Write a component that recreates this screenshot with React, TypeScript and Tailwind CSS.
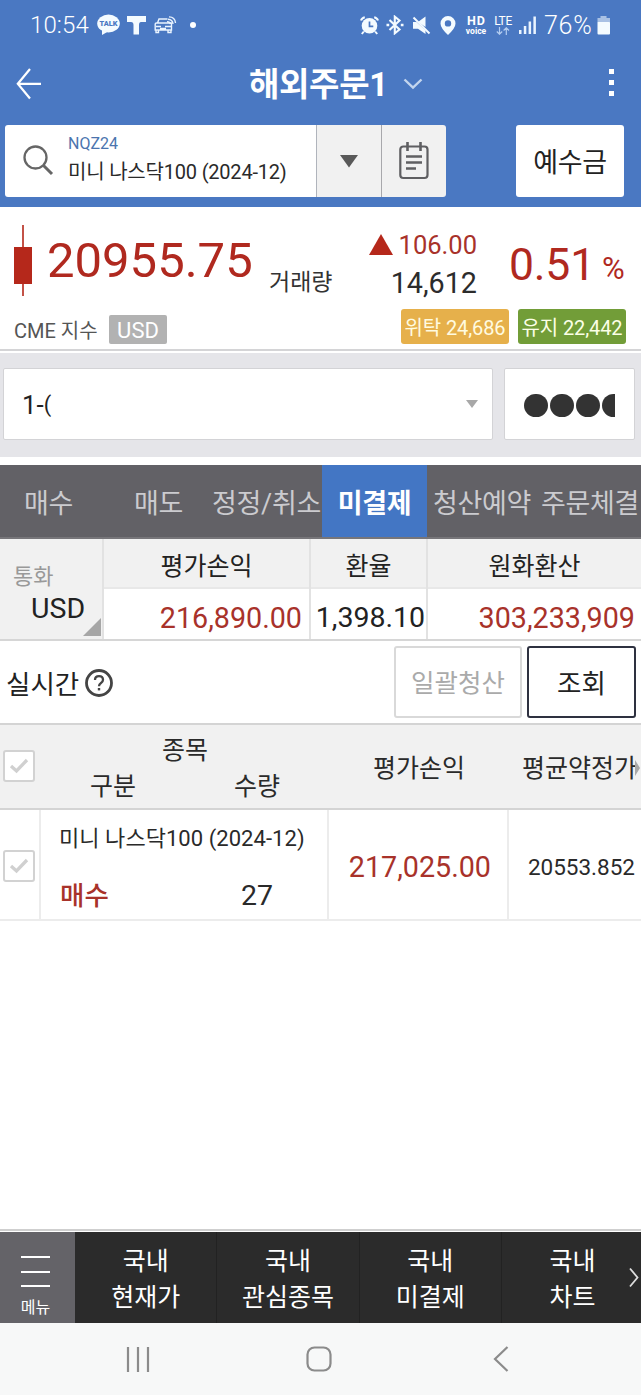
import React from "react";

function StatusBar() {
  return (
    <div className="flex h-[50px] items-center text-white">
      <span className="ml-[30px] w-[67px] shrink-0 text-[24px] leading-none font-light tracking-[0.1px]">10:54</span>
      <svg width="24" height="22" viewBox="0 0 24 22" className="shrink-0">
        <ellipse cx="11.5" cy="9.5" rx="11.3" ry="9" fill="#f4fbff" />
        <path d="M5 15 L5 21 L12 17 Z" fill="#f4fbff" />
        <text x="11.5" y="12.3" textAnchor="middle" fontSize="7.4" fontWeight="900" fill="#4a78c2" fontFamily="Roboto">
          TALK
        </text>
      </svg>
      <svg width="20" height="19" viewBox="0 0 20 19" className="ml-[6px] shrink-0">
        <path d="M0 0 H19 V6 H14 Q12 6 12 9 V18.500 H6.500 V9 Q6.500 6 4 6 H0 Z" fill="#f4fbff" />
      </svg>
      <svg width="23" height="18" viewBox="0 0 23 18" className="ml-[7px] shrink-0" fill="none" stroke="#eaf4ff" strokeWidth="1.400">
        <path d="M3.500 7 L5 3 H13.500 M1.200 8 Q1.200 7 2.500 7 H17.500 V14 H1.200 Z M2 14 V16.500 H4.500 V14 M14 14 V16.500 H17 V14 M2 10.500 H7 M11 10.500 H17 M6 12.500 H12" />
        <path d="M13 5.800 Q16 5.800 16.500 8 M14 3.300 Q18.500 3.500 19 8 M15 .9 Q21 1 21.500 7" />
      </svg>
      <span className="ml-[13px] size-[6px] shrink-0 rounded-full bg-white" />

      <svg width="19" height="19" viewBox="0 0 19 19" className="ml-[164px] shrink-0">
        <circle cx="9.500" cy="9.800" r="7.800" fill="#f4fbff" />
        <path d="M1 4.600 Q1.800 1.800 4.800 1.200 M18 4.600 Q17.200 1.800 14.200 1.200 M3.800 15.500 L1.800 18 M15.200 15.500 L17.200 18" stroke="#f4fbff" strokeWidth="2" fill="none" />
        <path d="M9.500 5.500 V10.300 H13.300" stroke="#4a78c2" strokeWidth="1.700" fill="none" />
      </svg>
      <svg width="18" height="20" viewBox="0 0 18 20" className="ml-[7px] shrink-0" fill="none" stroke="#f4fbff" strokeWidth="2.100">
        <path d="M3.500 5 L13.500 14.500 L8.800 18.300 V1.700 L13.500 5.500 L3.500 15" />
        <path d="M.5 10 H3.200 M14.800 10 H17.500" strokeWidth="2.400" />
      </svg>
      <svg width="19" height="19" viewBox="0 0 19 19" className="ml-[8px] shrink-0">
        <path d="M6 6 L13.500 .5 V11 Z M1 6 H4.500 L13.500 14.500 V18 L6 12.800 H1 Z" fill="#f4fbff" />
        <path d="M1.500 1.500 L17.500 17.500" stroke="#f4fbff" strokeWidth="2" />
      </svg>
      <svg width="16" height="19" viewBox="0 0 16 19" className="ml-[9px] shrink-0">
        <path fillRule="evenodd" d="M8 0 A7.500 7.500 0 0 1 15.500 7.500 Q15.500 12 8 19 Q.5 12 .5 7.500 A7.500 7.500 0 0 1 8 0 Z M8 4.200 A3.200 3.200 0 1 0 8 10.600 A3.200 3.200 0 1 0 8 4.200 Z" fill="#f4fbff" />
      </svg>
      <div className="ml-[9px] flex w-[22px] shrink-0 flex-col items-center">
        <span className="-mr-[1px] text-[12.500px] leading-[12px] font-bold tracking-[1px]">HD</span>
        <span className="text-[8.500px] leading-[9px] font-bold">voice</span>
      </div>
      <div className="ml-[6px] flex w-[20px] shrink-0 flex-col items-center">
        <span className="text-[12px] leading-[12px] tracking-[-0.4px]">LTE</span>
        <svg width="14" height="8" viewBox="0 0 14 8" fill="none" stroke="#b4cdf0" strokeWidth="1.200">
          <path d="M3.500 0 V7 M.8 4.500 L3.500 7.200 L6.200 4.500 M10.300 8 V1 M7.600 3.500 L10.300 .8 L13 3.500" />
        </svg>
      </div>
      <svg width="18" height="19" viewBox="0 0 18 19" className="ml-[6px] shrink-0" fill="#eaf4ff">
        <rect x="0" y="14" width="2.500" height="4" />
        <rect x="4.800" y="10" width="2.500" height="8" />
        <rect x="9.600" y="5.500" width="2.500" height="12.500" />
        <rect x="14.400" y=".5" width="2.500" height="17.500" />
      </svg>
      <span className="ml-[7px] w-[50px] shrink-0 text-[25px] leading-none font-light tracking-[0.7px]">76%</span>
      <svg width="14" height="19" viewBox="0 0 14 19" className="ml-[3px] shrink-0">
        <path d="M3.500 0 H9.500 V2 H13 V7 H.5 V2 H3.500 Z" fill="#a9c1e4" />
        <rect x=".5" y="6" width="12.500" height="12.500" rx="1" fill="#f4fbff" />
      </svg>
    </div>
  );
}

function Header() {
  return (
    <header className="h-[207px] bg-[#4a78c2]">
      <StatusBar />
      <div className="flex h-[75px] items-start">
        <svg width="26" height="32" viewBox="0 0 26 32" className="mt-[18px] ml-[16px] shrink-0" fill="none" stroke="#fff" strokeWidth="2.200">
          <path d="M14 1 L1.800 15.800 L14 30.500 M1.800 15.800 H25" />
        </svg>
        <h1 className="mt-[18px] ml-[207px] w-[142px] text-[33px] leading-none font-bold tracking-[-0.3px] whitespace-nowrap text-white">해외주문1</h1>
        <svg width="20" height="12" viewBox="0 0 20 12" className="mt-[28px] ml-[12px] shrink-0" fill="none" stroke="#c3d5ee" strokeWidth="2.400">
          <path d="M1.500 1.500 L10 9.500 L18.500 1.500" />
        </svg>
        <div className="mt-[19px] ml-[186px] flex flex-col gap-[6px]">
          <span className="size-[5px] bg-white" />
          <span className="size-[5px] bg-white" />
          <span className="size-[5px] bg-white" />
        </div>
      </div>
      <div className="flex h-[72px] pl-[5px]">
        <div className="flex w-[312px] rounded-l-[3px] border-r border-[#b0b4bc] bg-white">
          <svg width="32" height="32" viewBox="0 0 32 32" className="mt-[20px] ml-[17px] shrink-0" fill="none" stroke="#666" strokeWidth="2.300">
            <circle cx="13.500" cy="12.500" r="11" />
            <path d="M21.500 20.500 L30 29" strokeWidth="3" />
          </svg>
          <div className="ml-[14px] pt-[10px] whitespace-nowrap">
            <div className="text-[16px] leading-[17px] text-[#4b74ae]">NQZ24</div>
            <div className="mt-[10px] text-[20px] leading-[20px] tracking-[-0.2px] text-[#2a2a2a]">미니 나스닥100 (2024-12)</div>
          </div>
        </div>
        <div className="flex w-[65px] items-center justify-center border-r border-[#a8a8ac] bg-[#f1f1f1]">
          <svg width="18" height="13" viewBox="0 0 18 13">
            <path d="M0 0 H18 L9 12.500 Z" fill="#595959" />
          </svg>
        </div>
        <div className="flex w-[64px] items-center justify-center rounded-r-[3px] bg-[#f1f1f1]">
          <svg width="30" height="38" viewBox="0 0 30 38" fill="none" stroke="#5f5f62" strokeWidth="2.200">
            <rect x="1.300" y="4.500" width="27.200" height="31.500" rx="3" />
            <path d="M8.500 0 V9 M21.500 0 V9" strokeWidth="2.600" />
            <path d="M7 14.500 H23 M7 20.500 H23 M7 26.500 H17" strokeWidth="2.500" />
          </svg>
        </div>
        <button className="ml-[70px] w-[108px] rounded-[3px] bg-white pt-[5px] text-[27px] leading-none tracking-[-0.3px] text-[#222]">예수금</button>
      </div>
    </header>
  );
}

function Quote() {
  return (
    <section className="h-[144px] border-b-2 border-[#d4d4d6] bg-white">
      <div className="flex h-[100px] items-start whitespace-nowrap">
        <svg width="19" height="72" viewBox="0 0 19 72" className="mt-[18px] ml-[13px] shrink-0 fill-[#b5281b]">
          <rect x="9.200" y="0" width="1.600" height="71" />
          <rect x="1" y="22" width="18" height="37" />
        </svg>
        <span className="mt-[29px] ml-[15px] w-[222px] text-[49px] leading-none text-[#b0291f]">20955.75</span>
        <span className="mt-[64px] w-[65px] text-[23px] leading-none text-[#333]">거래량</span>
        <div className="mt-[25px] ml-[35px] w-[108px]">
          <div className="flex items-center justify-between">
            <svg width="24" height="21" viewBox="0 0 24 21" className="-mt-[2px]">
              <path d="M12 0 L24 21 H0 Z" fill="#b5281b" />
            </svg>
            <span className="text-[25.500px] leading-[26px] text-[#a8322a]">106.00</span>
          </div>
          <div className="mt-[11px] text-right text-[28.700px] leading-[28px] text-[#2c2c2c]">14,612</div>
        </div>
        <span className="mt-[36px] ml-[32px] w-[93px] text-[44.500px] leading-none tracking-[-0.2px] text-[#b0291f]">0.51</span>
        <span className="mt-[46px] text-[31px] leading-none text-[#b0291f]">%</span>
      </div>
      <div className="flex items-start whitespace-nowrap">
        <span className="mt-[14px] ml-[14px] w-[95px] text-[20px] leading-none text-[#555]">CME 지수</span>
        <span className="mt-[8px] flex h-[29px] w-[58px] items-center justify-center rounded-[2px] bg-[#b2b2b2] pt-[2px] text-[22px] leading-none text-white">USD</span>
        <span className="mt-[2px] ml-[234px] flex h-[35px] w-[108px] items-center justify-center rounded-[3px] bg-[#e6b04b] pt-[2px] text-[20px] leading-none tracking-[-0.1px] text-[#fffbe0]">위탁 24,686</span>
        <span className="mt-[2px] ml-[9px] flex h-[35px] w-[108px] items-center justify-center rounded-[3px] bg-[#729d38] pt-[2px] text-[20px] leading-none tracking-[-0.1px] text-[#fbffe6]">유지 22,442</span>
      </div>
    </section>
  );
}

function Account() {
  return (
    <section className="mt-[2px] flex h-[104px] bg-[#e5e5e9] pt-[15px] pl-[3px]">
      <div className="flex h-[72px] w-[490px] items-center rounded-[2px] border border-[#d3d3d6] bg-white pr-[14px] pl-[18px]">
        <span className="pt-[2px] text-[26px] leading-none text-[#222]">1-</span>
        <span className="pt-[1px] text-[22px] leading-none text-[#222]">(</span>
        <svg width="12" height="8" viewBox="0 0 12 8" className="ml-auto">
          <path d="M0 0 H12 L6 8 Z" fill="#a8a8a8" />
        </svg>
      </div>
      <div className="ml-[11px] flex h-[72px] w-[131px] items-center rounded-[2px] border border-[#d3d3d6] bg-white pt-[2px] pl-[19px]">
        <div className="flex w-[91px] gap-[2.500px] overflow-hidden">
          <span className="h-[23px] w-[23.500px] shrink-0 rounded-full bg-[#333]" />
          <span className="h-[23px] w-[23.500px] shrink-0 rounded-full bg-[#333]" />
          <span className="h-[23px] w-[23.500px] shrink-0 rounded-full bg-[#333]" />
          <span className="h-[23px] w-[23.500px] shrink-0 rounded-full bg-[#333]" />
        </div>
      </div>
    </section>
  );
}

function Tabs() {
  return (
    <nav className="mt-[8px] flex h-[74px] items-stretch border-b-2 border-[#77767a] bg-[#626166] text-[27px] leading-[78px] tracking-[-0.3px] whitespace-nowrap text-[#cbcbcf]">
      <span className="w-[109px] pl-[24px]">매수</span>
      <span className="w-[103px] pl-[25px]">매도</span>
      <span className="w-[110px] overflow-hidden">정정/취소</span>
      <span className="w-[105px] bg-[#4376c4] text-center font-bold text-white">미결제</span>
      <span className="w-[114px] pl-[6px]">청산예약</span>
      <span>주문체결</span>
    </nav>
  );
}

function Summary() {
  return (
    <section className="flex h-[102px] border-b-2 border-[#d6d6d6] whitespace-nowrap text-[#222]">
      <div className="flex w-[104px] border-r-2 border-[#e2e2e2] bg-[#f1f1f1]">
        <div className="w-[83px] pt-[27px] pl-[13px]">
          <div className="text-[22px] leading-[22px] text-[#999]">통화</div>
          <div className="mt-[6px] pl-[18px] text-[28.500px] leading-[29px]">USD</div>
        </div>
        <svg width="18" height="18" viewBox="0 0 18 18" className="mb-[3px] shrink-0 self-end">
          <path d="M18 0 V18 H0 Z" fill="#a6a6a6" />
        </svg>
      </div>
      <div className="w-[207px] border-r-2 border-[#e2e2e2]">
        <div className="h-[50px] border-b-2 border-[#e8e8e8] bg-[#f1f1f1] pt-[4px] text-center text-[25px] leading-[48px]">평가손익</div>
        <div className="pr-[7px] text-right text-[28.700px] leading-[58px] text-[#a8322a]">216,890.00</div>
      </div>
      <div className="w-[117px] border-r-2 border-[#e2e2e2]">
        <div className="h-[50px] border-b-2 border-[#e8e8e8] bg-[#f1f1f1] pt-[4px] text-center text-[25px] leading-[48px]">환율</div>
        <div className="pr-[1px] text-right text-[28.500px] leading-[58px]">1,398.10</div>
      </div>
      <div className="flex-1">
        <div className="h-[50px] border-b-2 border-[#e8e8e8] bg-[#f1f1f1] pt-[4px] text-center text-[25px] leading-[48px]">원화환산</div>
        <div className="pr-[6px] text-right text-[28.700px] leading-[58px] text-[#a8322a]">303,233,909</div>
      </div>
    </section>
  );
}

function Actions() {
  return (
    <section className="flex h-[82px] pt-[5px] whitespace-nowrap">
      <span className="w-[85px] pl-[6px] text-[26.500px] leading-[78px] text-[#222]">실시간</span>
      <svg width="28" height="28" viewBox="0 0 28 28" className="mt-[23px]" fill="none" stroke="#444" strokeWidth="2.800">
        <circle cx="14" cy="14" r="12.500" />
        <path d="M10 11 Q10 7.200 14 7.200 Q18 7.200 18 10.800 Q18 12.700 16 14 Q14 15.300 14 17.300" strokeWidth="2.300" />
        <rect x="12.800" y="19" width="2.400" height="2.400" fill="#444" stroke="none" />
      </svg>
      <button className="ml-[281px] h-[72px] w-[128px] rounded-[3px] border-2 border-[#d9d9d9] pt-[4px] text-[25.500px] leading-none text-[#aaa]">일괄청산</button>
      <button className="ml-[5px] h-[72px] w-[109px] rounded-[3px] border-2 border-[#2e3140] pt-[4px] text-[26.500px] leading-none text-[#222]">조회</button>
    </section>
  );
}

function Check() {
  return (
    <span className="flex h-[32px] w-[32px] items-center justify-center rounded-[3px] border-2 border-[#d2d2d2] bg-white">
      <svg width="20" height="16" viewBox="0 0 20 16" fill="none" stroke="#d0d0d0" strokeWidth="3.300">
        <path d="M2 8 L7.500 13 L18 2" />
      </svg>
    </span>
  );
}

function Positions() {
  return (
    <section className="h-[506px] whitespace-nowrap text-[#2a2a2a]">
      <div className="flex h-[87px] border-y-2 border-[#d4d4d4] bg-[#f1f1f1] text-[25px] leading-[25px]">
        <div className="w-[41px] pt-[25px] pl-[3px]">
          <Check />
        </div>
        <div className="w-[288px] pt-[13px]">
          <div className="text-center">종목</div>
          <div className="mt-[11px] flex pl-[49px]">
            <span className="w-[144px]">구분</span>
            <span>수량</span>
          </div>
        </div>
        <div className="w-[180px] pt-[31px] text-center">평가손익</div>
        <div className="flex flex-1 overflow-hidden pt-[31px] pl-[13px]">
          <span>평균약정가</span>
          <svg width="5" height="16" viewBox="0 0 5 16" className="mt-[4px] -ml-[2px] shrink-0">
            <path d="M0 0 L5 8 L0 16 Z" fill="#a8a8a8" />
          </svg>
        </div>
      </div>
      <div className="flex h-[111px] border-b-2 border-[#ececec]">
        <div className="w-[41px] border-r-2 border-[#ececec] pt-[40px] pl-[3px]">
          <Check />
        </div>
        <div className="w-[288px] border-r-2 border-[#ececec] pl-[18px]">
          <div className="mt-[18px] text-[22px] leading-[22px] tracking-[0.05px]">미니 나스닥100 (2024-12)</div>
          <div className="mt-[32px] flex items-center pl-px">
            <span className="w-[181px] text-[26.500px] leading-[28px] font-medium text-[#a8322a]">매수</span>
            <span className="text-[28.500px] leading-[28px]">27</span>
          </div>
        </div>
        <div className="w-[180px] border-r-2 border-[#ececec] pr-[16px] text-right text-[28.700px] leading-[115px] text-[#a8322a]">217,025.00</div>
        <div className="flex-1 pr-[6px] text-right text-[22.500px] leading-[114px]">20553.852</div>
      </div>
    </section>
  );
}

const shortcuts = ["현재가", "관심종목", "미결제", "차트"];

function BottomBar() {
  return (
    <footer className="border-t-2 border-[#cfcfcf] pt-px">
      <div className="flex h-[91px] bg-[#2b2b2b] whitespace-nowrap text-white">
        <div className="flex w-[75px] flex-col items-center bg-[#646368] pt-[24px] pr-[4px]">
          <span className="h-[2px] w-[29px] bg-white" />
          <span className="mt-[13px] h-[2px] w-[29px] bg-white" />
          <span className="mt-[12px] h-[2px] w-[29px] bg-white" />
          <span className="mt-[13px] text-[16px] leading-none">메뉴</span>
        </div>
        {shortcuts.map((name) => (
          <div key={name} className="w-[142.300px] shrink-0 border-r border-[#222] pt-[12px] text-center text-[25px] leading-[36px]">
            <div>국내</div>
            <div>{name}</div>
          </div>
        ))}
        <svg width="10" height="21" viewBox="0 0 10 21" className="mt-[35px] -ml-[15px] shrink-0" fill="none" stroke="#ddd" strokeWidth="1.800">
          <path d="M1 1.500 L8.500 10.500 L1 19.500" />
        </svg>
      </div>
      <div className="flex h-[72px] items-center bg-[#f7f8f8] text-[#8b8b8b]">
        <svg width="24" height="25" viewBox="0 0 24 25" className="ml-[126px]" stroke="currentColor" strokeWidth="2.200">
          <path d="M2 0 V25 M12 0 V25 M22 0 V25" />
        </svg>
        <svg width="26" height="26" viewBox="0 0 26 26" className="ml-[156px]" fill="none" stroke="currentColor" strokeWidth="2.200">
          <rect x="1.500" y="1.500" width="23" height="23" rx="7" />
        </svg>
        <svg width="16" height="26" viewBox="0 0 16 26" className="ml-[161px]" fill="none" stroke="currentColor" strokeWidth="2.200">
          <path d="M14.500 1 L2 13 L14.500 25" />
        </svg>
      </div>
    </footer>
  );
}

export default function App() {
  return (
    <div className="h-[1395px] w-[641px] overflow-hidden bg-white font-['Roboto','Noto_Sans_CJK_KR',sans-serif]">
      <Header />
      <Quote />
      <Account />
      <Tabs />
      <Summary />
      <Actions />
      <Positions />
      <BottomBar />
    </div>
  );
}
